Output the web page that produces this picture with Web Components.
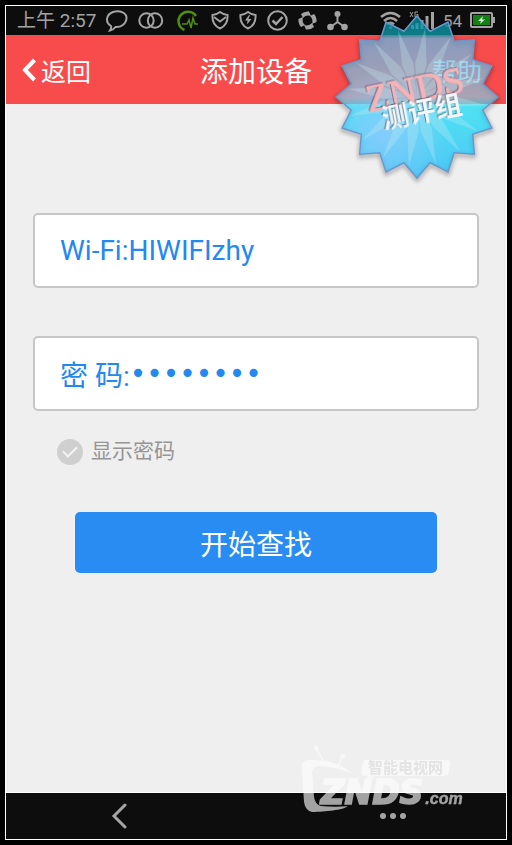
<!DOCTYPE html>
<html lang="zh-CN">
<head>
<meta charset="utf-8">
<meta name="viewport" content="width=device-width, initial-scale=1">
<title>添加设备</title>
<style>
    body {
        margin: 0;
        background: #000;
        font-family: Roboto, "Noto Sans CJK SC", sans-serif;
    }
</style>
</head>
<body>
<device-page>
    <status-bar slot="top" time="上午 2:57" battery="54"></status-bar>
    <title-bar slot="top">
        <span slot="back">返回</span>
        添加设备
        <span slot="help">帮助</span>
    </title-bar>
    <text-field name="wifi" label="Wi-Fi:" type="text" value="HIWIFIzhy"></text-field>
    <text-field name="password" label="密 码:" type="password" value="12345678"></text-field>
    <check-option>显示密码</check-option>
    <action-button>开始查找</action-button>
    <nav-bar slot="bottom"></nav-bar>
    <star-badge slot="overlay"></star-badge>
    <tv-mark slot="overlay"></tv-mark>
</device-page>

<script>
class DevicePage extends HTMLElement {
    constructor () {
        super();
        this.attachShadow({mode: 'open'}).innerHTML = `<style>
            :host {
                display: flex;
                flex-direction: column;
                box-sizing: border-box;
                min-height: 100vh;
                padding: 5px;
                position: relative;
                overflow: hidden;
            }

            .screen {
                flex: 1;
                display: flex;
                flex-direction: column;
                border: 1px solid #fff;
                background: #efefef;
            }

            main {
                flex: 1;
                display: flex;
                flex-direction: column;
                padding: 109px 27px 40px;
            }
        </style>
        <div class="screen">
            <slot name="top"></slot>
            <main><slot></slot></main>
            <slot name="bottom"></slot>
        </div>
        <slot name="overlay"></slot>`;
    }
}

class StatusBar extends HTMLElement {
    constructor () {
        super();
        this.attachShadow({mode: 'open'}).innerHTML = `<style>
            :host {
                display: flex;
                align-items: center;
                justify-content: space-between;
                height: 29px;
                padding: 0 9px 0 11px;
                background: #0d0d0d;
                color: #a3a3a3;
                font-size: 19px;
                line-height: 28px;
            }

            div {
                display: flex;
                align-items: center;
                gap: 10px;
            }

            .right {
                gap: 8px;
                font-size: 17px;
            }

            svg {
                display: block;
                fill: none;
                stroke: currentColor;
                stroke-width: 2;
            }

            .pulse {
                color: #4f8f0c;
            }
        </style>
        <div>
            <span>${this.getAttribute('time')}</span>
            ${this.buildNotifications()}
        </div>
        <div class="right">
            ${this.buildSignals()}
            <span>${this.getAttribute('battery')}</span>
            ${this.buildBattery()}
        </div>`;
    }

    buildNotifications() {
        return `
        <svg width="22" height="22"><path d="M4 20.500C5 19 5.500 17.500 5 16C-1.500 12 .5 4.500 7 2C14 0 21 3 20.500 8.500C20 14 15 17.500 9.500 17C8 19 6.500 20 4 20.500Z"/></svg>
        <svg width="26" height="22"><circle cx="8.500" cy="10.500" r="7.200"/><circle cx="17" cy="10.500" r="7.200"/></svg>
        <svg class="pulse" width="27" height="22">
            <path d="M10.500 20A9.500 9.500 0 1 1 22 6" stroke-width="2.500"/>
            <path d="M8 14H13L15 10L17 18L19 8L21 14H24" stroke-width="1.500"/>
        </svg>
        <svg width="18" height="22"><path d="M1.500 5C4 5 7 3.500 9 2C11 3.500 14 5 16.500 5C17 11 14.500 16 9 18.500C3.500 16 1 11 1.500 5Z"/><path d="M3 7L9 11.500L15 7" stroke-width="1.800"/></svg>
        <svg width="18" height="22"><path d="M1.500 5C4 5 7 3.500 9 2C11 3.500 14 5 16.500 5C17 11 14.500 16 9 18.500C3.500 16 1 11 1.500 5Z"/><path d="M10 5L6 10.500H8.500L8 14.500L12.500 9H9.500L11 5Z" fill="currentColor" stroke="none"/></svg>
        <svg width="21" height="22"><circle cx="10.500" cy="10.500" r="9.300"/><path d="M5.500 10.500L9 14L15.500 7" stroke-width="2.500"/></svg>
        <svg width="19" height="22"><g fill="currentColor" stroke="none">${this.buildBlades()}</g></svg>
        <svg width="21" height="22"><path d="M10.500 4V12L3.500 17M10.500 12L17.500 17"/><g fill="currentColor" stroke="none"><circle cx="10.500" cy="4" r="3"/><circle cx="3.500" cy="17" r="3.300"/><circle cx="17.500" cy="17" r="3.300"/></g></svg>`;
    }

    buildBlades() {
        let dom = '';

        for (let i = 0; i < 4; i++) {
            dom += `<path d="M3 4Q6.500 1 11 1.500L13 6Q8 4.500 5 8Z" transform="rotate(${i * 90} 9.500 10.500)"/>`;
        }

        return dom;
    }

    buildSignals() {
        return `
        <svg width="21" height="22"><path d="M1 7Q10.500 -1 20 7M4 11Q10.500 5 17 11M7 14.500Q10.500 11 14 14.500" stroke-width="2.500"/><circle cx="10.500" cy="17.500" r="1.500" fill="currentColor" stroke="none"/></svg>
        <svg width="26" height="22"><path d="M1 2L4 7M4 2L1 7M9 2H6V7H9V4.500H7.500" stroke-width="1"/><path d="M3.500 15V19M8 13V19M13 10V19M18 6V19M23.500 2V19" stroke-width="3"/></svg>`;
    }

    buildBattery() {
        return `
        <svg width="27" height="18">
            <rect x="1" y="1" width="21" height="14" rx="1"/>
            <rect x="3" y="3" width="17" height="10" fill="#128012" stroke="none"/>
            <path d="M24 5V11" stroke-width="2"/>
            <path d="M13 4L8 9H11L10 12L15 7.500H12Z" fill="#d5e5d5" stroke="none"/>
        </svg>`;
    }
}

class TitleBar extends HTMLElement {
    constructor () {
        super();
        this.attachShadow({mode: 'open'}).innerHTML = `<style>
            :host {
                display: grid;
                grid-template-columns: 1fr auto 1fr;
                align-items: center;
                box-sizing: border-box;
                height: 69px;
                padding: 0 16px;
                background: #f84c4c;
                color: #fff;
                font-size: 25px;
            }

            h1 {
                margin: 0;
                font-size: 28px;
                font-weight: 400;
            }

            a {
                display: flex;
                align-items: center;
                gap: 5px;
                color: inherit;
                text-decoration: none;
            }

            .help {
                justify-self: end;
                margin-right: 8px;
            }

            svg {
                fill: none;
                stroke: currentColor;
                stroke-width: 4;
            }
        </style>
        <a href="#back">
            <svg width="14" height="24"><path d="M12.500 2L3 12L12.500 22"/></svg>
            <slot name="back"></slot>
        </a>
        <h1><slot></slot></h1>
        <a class="help" href="#help"><slot name="help"></slot></a>`;
    }
}

class TextField extends HTMLElement {
    constructor () {
        super();
        const name = this.getAttribute('name');
        const type = this.getAttribute('type');

        this.attachShadow({mode: 'open'}).innerHTML = `<style>
            :host {
                display: flex;
                align-items: center;
                box-sizing: border-box;
                height: 75px;
                margin-bottom: 48px;
                padding: 0 25px;
                border: 2px solid #c6c6c6;
                border-radius: 5px;
                background: #fff;
                color: #2388f0;
                font-size: 28px;
            }

            :host([type=password]) {
                margin-bottom: 27px;
            }

            label {
                white-space: pre;
            }

            input {
                flex: 1;
                min-width: 0;
                padding: 0;
                border: 0;
                outline: 0;
                background: none;
                color: inherit;
                font: inherit;
            }

            input[type=password] {
                font-family: "DejaVu Sans", sans-serif;
            }
        </style>
        <label for="${name}">${this.getAttribute('label')}</label>
        <input id="${name}" type="${type}" value="${this.getAttribute('value')}">`;
    }
}

class CheckOption extends HTMLElement {
    constructor () {
        super();
        this.attachShadow({mode: 'open'}).innerHTML = `<style>
            :host {
                display: flex;
                margin: 0 24px 47px;
                color: #959595;
                font-size: 21px;
                line-height: 27px;
            }

            label {
                display: flex;
                align-items: center;
                gap: 8px;
            }

            input {
                appearance: none;
                display: grid;
                place-items: center;
                width: 26px;
                height: 26px;
                margin: 0;
                border-radius: 50%;
                background: #cfcfcf;
            }

            input::before {
                content: "";
                width: 12px;
                height: 6px;
                margin-bottom: 4px;
                border: solid #f3f3f3;
                border-width: 0 0 2px 2px;
                transform: rotate(-45deg);
            }
        </style>
        <label><input type="checkbox"><slot></slot></label>`;
    }
}

class ActionButton extends HTMLElement {
    constructor () {
        super();
        this.attachShadow({mode: 'open'}).innerHTML = `<style>
            :host {
                display: flex;
                margin: 0 42px;
            }

            button {
                flex: 1;
                height: 61px;
                padding: 0;
                border: 0;
                border-radius: 5px;
                background: #288cf2;
                color: #fff;
                font: inherit;
                font-size: 28px;
            }
        </style>
        <button type="button"><slot></slot></button>`;
    }
}

class NavBar extends HTMLElement {
    constructor () {
        super();
        this.attachShadow({mode: 'open'}).innerHTML = `<style>
            :host {
                display: flex;
                justify-content: space-between;
                align-items: center;
                height: 46px;
                padding: 0 93px;
                border-top: 1px solid #fff;
                background: #0d0d0d;
            }

            button {
                display: grid;
                place-items: center;
                width: 40px;
                height: 40px;
                padding: 0;
                border: 0;
                background: none;
                color: #a5a5a5;
            }
        </style>
        <button type="button" aria-label="返回">
            <svg width="16" height="28" fill="none" stroke="currentColor" stroke-width="3" stroke-linecap="round"><path d="M14 3L3 14L14 25"/></svg>
        </button>
        <button type="button" aria-label="更多">
            <svg width="28" height="8" fill="currentColor"><circle cx="4" cy="4" r="3"/><circle cx="14" cy="4" r="3"/><circle cx="24" cy="4" r="3"/></svg>
        </button>`;
    }
}

class StarBadge extends HTMLElement {
    constructor () {
        super();
        this.attachShadow({mode: 'open'}).innerHTML = `<style>
            :host {
                display: block;
                position: absolute;
                top: 15px;
                right: 13px;
                pointer-events: none;
            }

            svg {
                display: block;
                overflow: visible;
            }

            .shadow {
                filter: blur(2px);
            }

            text {
                filter: drop-shadow(-1px -1px 0 rgba(70, 50, 80, .5));
            }
        </style>
        <svg width="164" height="164" viewBox="0 0 164 164">
            <defs>
                <linearGradient id="fill" x1="0" y1="0" x2="0" y2="1">
                    <stop offset="0" stop-color="#0098a8" stop-opacity=".75"/>
                    <stop offset=".12" stop-color="#10a0b0" stop-opacity=".75"/>
                    <stop offset=".14" stop-color="#60b8e8" stop-opacity=".72"/>
                    <stop offset=".5" stop-color="#88c8e0" stop-opacity=".7"/>
                    <stop offset=".56" stop-color="#10dcf4" stop-opacity=".72"/>
                    <stop offset="1" stop-color="#18b8f8" stop-opacity=".75"/>
                </linearGradient>
                <radialGradient id="shine" cx=".3" cy=".72" r=".4">
                    <stop offset="0" stop-color="#9cc8ff" stop-opacity=".7"/>
                    <stop offset="1" stop-color="#9cc8ff" stop-opacity="0"/>
                </radialGradient>
            </defs>
            <polygon class="shadow" points="${this.buildStar(16, 81, 67)}" transform="translate(0 2)" fill="none" stroke="#000" stroke-opacity=".35" stroke-width="3"/>
            <polygon points="${this.buildStar(16, 81, 67)}" fill="url(#fill)" stroke="#6c96cc" stroke-width="1.500"/>
            <polygon points="${this.buildStar(16, 80, 66)}" fill="url(#shine)"/>
            <path d="${this.buildRays(16, 34, 74)}" fill="#c8f0f0" fill-opacity=".28"/>
            <g transform="rotate(-12 34 97)">
                <text x="34" y="97" font-family="Liberation Serif" font-size="38" fill="#f4b4b8" stroke="#f4b4b8" stroke-width="1">ZNDS</text>
            </g>
            <g transform="rotate(-11 49 114)">
                <text x="49" y="114" font-family="Noto Sans CJK SC" font-weight="700" font-size="27" fill="#f2f6f8">测评组</text>
            </g>
        </svg>`;
    }

    /**
     * Points of a star centred in the badge
     * @param {number} n number of tips
     * @param {number} outer
     * @param {number} inner
     * @returns {string}
     */
    buildStar(n, outer, inner) {
        const points = [];

        for (let i = 0; i < n * 2; i++) {
            points.push(this.polar(i * Math.PI / n, i % 2 ? inner : outer));
        }

        return points.join(' ');
    }

    buildRays(n, inner, outer) {
        let d = '';

        for (let i = 0; i < n; i++) {
            const angle = (i + .3) * Math.PI * 2 / n;
            d += `M82 82L${this.polar(angle - .17, inner)}L${this.polar(angle, outer - 4)}L${this.polar(angle + .17, inner)}Z`;
        }

        return d;
    }

    polar(angle, r) {
        return `${82 + r * Math.sin(angle)},${82 - r * Math.cos(angle)}`;
    }
}

class TvMark extends HTMLElement {
    constructor () {
        super();
        this.attachShadow({mode: 'open'}).innerHTML = `<style>
            :host {
                display: block;
                position: absolute;
                right: 42px;
                bottom: 28px;
                opacity: .62;
                pointer-events: none;
            }

            svg {
                display: block;
            }
        </style>
        <svg width="180" height="87" viewBox="0 0 540 261" fill="#fff">
            <circle cx="78" cy="54" r="7"/>
            <circle cx="158" cy="78" r="7"/>
            <path d="M78 54L106 104M158 78L143 110" stroke="#fff" stroke-width="4"/>
            <path d="M35 108Q36 90 58 90C110 88 160 104 184 130C150 116 100 106 78 110Q65 113 66 130L72 200Q75 222 92 228C118 231 145 231 173 229C160 240 105 246 66 246Q45 240 42 215Z"/>
            <path d="M226 90H470Q482 90 480 102L476 126Q474 137 463 137H256L228 150L234 137H224Q213 137 215 126L218 100Q219 90 226 90Z"/>
            <text x="234" y="128" font-family="Liberation Sans, Noto Sans CJK SC" font-weight="700" font-size="45" fill="#dcdcdc">智能电视网</text>
            <g font-weight="700" font-style="italic">
                <text x="92" y="222" font-family="DejaVu Sans" font-size="99" stroke="#fff" stroke-width="5">ZNDS</text>
                <text x="406" y="221" font-family="Liberation Sans" font-size="48" stroke="#fff" stroke-width="1">.com</text>
            </g>
        </svg>`;
    }
}

customElements.define('device-page', DevicePage);
customElements.define('status-bar', StatusBar);
customElements.define('title-bar', TitleBar);
customElements.define('text-field', TextField);
customElements.define('check-option', CheckOption);
customElements.define('action-button', ActionButton);
customElements.define('nav-bar', NavBar);
customElements.define('star-badge', StarBadge);
customElements.define('tv-mark', TvMark);
</script>
</body>
</html>
